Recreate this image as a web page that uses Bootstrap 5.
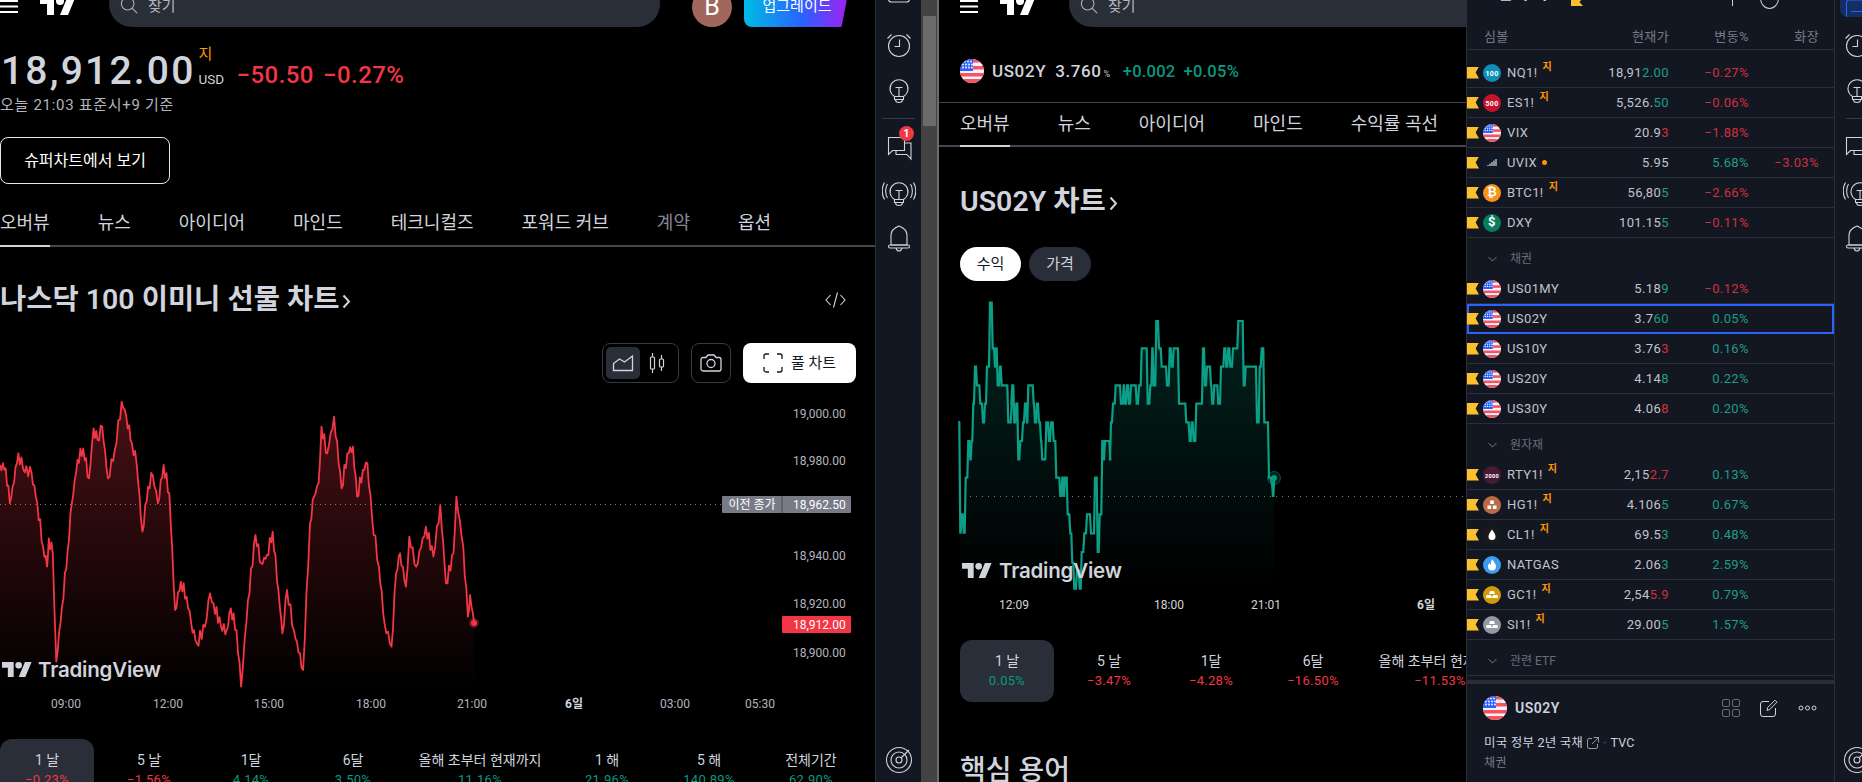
<!DOCTYPE html>
<html lang="ko">
<head>
  <meta charset="UTF-8">
  <title>나스닥 100 이미니 선물 차트</title>
  <link href="https://cdn.jsdelivr.net/npm/bootstrap@5.3.0/dist/css/bootstrap.min.css" rel="stylesheet">
  <style>
    html, body { height: 782px; overflow: hidden; background: #000; }
    body { font-family: Roboto, "Noto Sans CJK KR", sans-serif; color: #d1d4dc; }
    .stage { width: 1862px; height: 782px; overflow: hidden; }
    .pane-a { width: 875px; flex: none; overflow: hidden; }
    .pane-b { width: 527px; flex: none; overflow: hidden; }
    .pad-b { padding-left: 21px; }

    .topbar { height: 27px; overflow: hidden; align-items: flex-end; }
    .burger { width: 18px; height: 13px; margin-bottom: 14px; flex: none; }
    .tv-mark { width: 36px; height: 18px; margin: 0 0 12px 22px; flex: none; }
    .search-box { height: 46px; background: #2a2e39; border-radius: 23px; padding: 0 0 0 11px; flex: none; margin-left: 33px; color: #b2b5be; font-size: 15px; line-height: 51px; }
    .search-box svg { margin: 0 10px 0 0; vertical-align: -3px; }
    .search-a { width: 551px; }
    .search-b { width: 440px; }
    .avatar { width: 40px; height: 40px; border-radius: 50%; background: #a0685c; color: #fff; font-size: 25px; line-height: 40px; text-align: center; margin-left: 32px; flex: none; }
    .upgrade { width: 106px; height: 44px; margin-left: 12px; flex: none; color: #fff; font-size: 15px; text-align: center; line-height: 46px; border-radius: 0 0 0 8px; background: linear-gradient(90deg, #00bce5 0%, #2962ff 55%, #a91cf0 100%); clip-path: polygon(0 0, 100% 0, 92% 100%, 0 100%); }

    .quote-line { height: 58px; padding-top: 23px; }
    .last-price { font-size: 39px; font-weight: 500; letter-spacing: 2.2px; line-height: 42px; margin-left: 1px; }
    .price-tags { width: 38px; margin-left: 3px; }
    .sess-tag { color: #ff9800; font-size: 15px; line-height: 14px; margin-top: -3px; }
    .cur-tag { font-size: 13.5px; line-height: 14px; margin-top: 11px; color: #d1d4dc; }
    .day-change { color: #f23645; font-size: 24px; font-weight: 500; letter-spacing: .45px; line-height: 42px; margin-top: 4px; white-space: nowrap; }
    .day-change span + span { margin-left: 9px; }
    .as-of { font-size: 15px; letter-spacing: .7px; color: #b2b5be; line-height: 18px; margin-top: 11px; }
    .super-btn { display: block; width: 170px; height: 47px; margin: 23px 0 0 0; background: #000; border: 1px solid #e6e7eb; border-radius: 8px; color: #fff; font-size: 16px; line-height: 45px; padding: 0; text-align: center; }

    .page-tabs { height: 63px; border-bottom: 2px solid #434651; gap: 48px; flex-wrap: nowrap; }
    .page-tabs li { height: 61px; line-height: 16px; font-size: 18px; white-space: nowrap; color: #d1d4dc; position: relative; padding-top: 31px; }
    .page-tabs li.on::after { content: ""; position: absolute; left: 0; right: 0; bottom: -2px; height: 2px; background: #d1d4dc; }
    .page-tabs li.dim { color: #868993; }
    .head-a { height: 88px; align-items: center; justify-content: space-between; padding-right: 29px; padding-top: 18px; }
    .chart-title { font-size: 28.5px; font-weight: 600; line-height: 32px; margin: 0; color: #d1d4dc; white-space: nowrap; }
    .chart-title svg { margin-left: 3px; }

    .chart-a { height: 404px; position: relative; }
    .chart-a svg.plot { display: block; }
    .chart-tools { position: absolute; top: 8px; right: 19px; gap: 12px; }
    .tool-group { width: 77px; height: 40px; border: 1px solid #363a45; border-radius: 8px; padding: 3px; }
    .tool-on { width: 34px; height: 32px; background: #2a2e39; border-radius: 5px; }
    .tool-off { width: 34px; height: 32px; }
    .tool-cam { width: 40px; height: 40px; border: 1px solid #363a45; border-radius: 8px; }
    .tool-full { width: 113px; height: 40px; background: #fff; color: #131722; border-radius: 8px; font-size: 15px; gap: 8px; }
    svg text { font-family: Roboto, "Noto Sans CJK KR", sans-serif; }
    .tv-word { font-family: Inter, Lato, sans-serif; font-weight: 600; fill: #d1d4dc; letter-spacing: -.2px; }

    .range-row { gap: 8px; flex-wrap: nowrap; }
    .range-item { width: 94px; height: 62px; flex: none; border-radius: 12px; text-align: center; padding-top: 12px; font-size: 14px; line-height: 19px; white-space: nowrap; }
    .range-item.wide { width: 144px; }
    .range-item.on { background: #2a2e39; }
    .range-item b { display: block; font-weight: 400; font-size: 13px; line-height: 19px; letter-spacing: .3px; }
    .up { color: #089981; }
    .down { color: #f23645; }

    .rail { width: 46px; flex: none; background: #131722; border-left: 1px solid #2a2e39; height: 782px; overflow: hidden; }
    .rail-narrow { width: 27px; border-left: 0; }
    .rail-top { height: 10px; margin-bottom: 12px; overflow: hidden; align-items: flex-end; justify-content: center; }
    .rail svg { display: block; flex: none; color: #d1d4dc; }
    .rail-slot { height: 45px; position: relative; align-items: center; justify-content: center; }
    .rail-line { height: 1px; width: 33px; background: #363a45; margin: 6px auto; }
    .rail-end { margin-top: auto; height: 44px; }
    .rail-narrow .rail-slot { justify-content: flex-start; padding-left: 8px; }
    .rail-narrow .rail-line { margin: 6px 0 6px 11px; width: 16px; }
    .rail-active { height: 17px; margin: 0 0 5px 5px; width: 22px; background: #142e61; border-radius: 0 0 0 8px; overflow: hidden; align-items: flex-end; padding-left: 3px; }
    .rail-active svg { color: #2962ff; margin-bottom: -10px; }
    .count-dot { position: absolute; top: 1px; left: 23px; width: 15px; height: 15px; border-radius: 50%; background: #f23645; color: #fff; font-size: 11px; font-weight: 700; line-height: 15px; text-align: center; }
    .scroll-track { width: 18px; flex: none; background: #434343; border-right: 2px solid #6b6b6b; height: 782px; padding: 16px 1px 0 2px; }
    .scroll-thumb { height: 110px; background: #6b6b6b; }

    .quote-b { height: 76px; padding-top: 32px; gap: 8px; border-bottom: 1px solid #434651; align-items: flex-start; }
    .quote-b svg { flex: none; }
    .quote-b-txt { font-size: 17px; font-weight: 500; line-height: 24px; letter-spacing: .6px; white-space: nowrap; }
    .quote-b-txt small { font-size: 9px; margin-left: 2px; color: #b2b5be; }
    .quote-b-txt .val { margin-left: 9px; }
    .quote-b-txt .up { font-size: 16.5px; letter-spacing: .25px; margin-left: 12px; }
    .quote-b-txt .up + .up { margin-left: 8px; }
    .tabs-b { height: 44px; }
    .tabs-b li { height: 42px; padding-top: 13px; }
    .head-b { height: 100px; align-items: center; padding-top: 10px; }
    .pill-row { gap: 8px; height: 34px; }
    .pill-on, .pill-off { height: 34px; border-radius: 17px; font-size: 15px; line-height: 34px; text-align: center; }
    .pill-on { width: 61px; background: #fff; color: #131722; }
    .pill-off { width: 62px; background: #2a2e39; color: #d1d4dc; }
    .chart-b { height: 344px; margin: 15px 0 0 -21px; }
    .key-terms { font-size: 28px; font-weight: 500; line-height: 36px; margin: 51px 0 0 0; white-space: nowrap; }

    .watch { width: 369px; flex: none; background: #131722; border-left: 1px solid #2a2e39; border-right: 1px solid #2a2e39; height: 782px; overflow: hidden; font-size: 13px; letter-spacing: .4px; }
    .watch-title { height: 10px; overflow: hidden; position: relative; padding-left: 16px; }
    .watch-title b { display: block; margin-top: -17px; font-size: 16px; line-height: 22px; font-weight: 600; }
    .watch-title i { position: absolute; left: 104px; top: -2px; width: 12px; height: 8px; background: #fbc02d; clip-path: polygon(0 0, 100% 0, 70% 50%, 100% 100%, 0 100%); }
    .title-ring { position: absolute; left: 293px; top: -13px; width: 19px; height: 22px; border-radius: 50%; border: 1px solid #d1d4dc; }
    .title-stem { position: absolute; left: 265px; top: 0; width: 1px; height: 6px; background: #d1d4dc; }
    .watch-cols { height: 40px; border-bottom: 1px solid #2a2e39; color: #787b86; align-items: center; padding: 14px 0 0 17px; margin-bottom: 8px; }
    .cols-sym { width: 102px; }
    .cols-last { width: 83px; text-align: right; }
    .wl-row { height: 30px; align-items: center; border-bottom: 1px solid #2a2e39; white-space: nowrap; }
    .wl-sel { outline: 2px solid #2962ff; outline-offset: -2px; }
    .col-sym { width: 90px; flex: none; }
    .col-num { width: 80px; flex: none; text-align: right; }
    .col-ext { width: 70px; flex: none; text-align: right; }
    .wl-flag { width: 12px; height: 12px; background: #fbc02d; clip-path: polygon(0 0, 100% 0, 72% 50%, 100% 100%, 0 100%); margin-right: 4px; flex: none; }
    .wl-ico { width: 18px; height: 18px; margin-right: 6px; flex: none; display: block; }
    .wl-sym { color: #c1c4cc; }
    .wl-tag { color: #ff9800; font-size: 10px; font-weight: 700; position: relative; top: -6px; margin-left: 5px; }
    .wl-dot { width: 5px; height: 5px; border-radius: 50%; background: #ff9800; margin-left: 5px; }
    .wl-price { width: 72px; flex: none; text-align: right; color: #c1c4cc; }
    .tone-up { color: #1f9c86; }
    .tone-down { color: #cf2f3e; }
    .wl-group { height: 36px; align-items: center; color: #6a6d78; font-size: 12px; padding: 6px 0 0 21px; letter-spacing: 0; }
    .wl-group svg { margin-right: 13px; }
    .wl-group.ruled { border-bottom: 1px solid #2a2e39; }
    .wl-break { height: 4px; background: #2a2e39; margin-top: 4px; }
    .det-head { height: 48px; padding: 0 17px 0 16px; align-items: center; }
    .det-head b { font-size: 14px; font-weight: 600; margin-left: 8px; letter-spacing: .5px; }
    .det-gap { margin-left: 20px; }
    .det-line { padding-left: 17px; font-size: 12.5px; line-height: 18px; margin-top: 2px; letter-spacing: .2px; gap: 4px; align-items: center; }
    .det-kind { padding-left: 17px; font-size: 12px; line-height: 18px; color: #787b86; margin-top: 2px; }
  </style>
</head>
<body>
  <!-- shared icons -->
  <svg width="0" height="0" class="d-block position-absolute">
    <symbol id="ico-alarm" viewBox="0 0 28 28"><g fill="none" stroke="currentColor" stroke-width="1.1"><circle cx="14" cy="15" r="10.5"/><path d="M14.5 8.5v7H9.5M2.5 7.5l4-4M25.5 7.5l-4-4"/></g></symbol>
    <symbol id="ico-bulb" viewBox="0 0 28 28"><g fill="none" stroke="currentColor" stroke-width="1.1"><path d="M9.5 20.5a9 9 0 1 1 9 0"/><path d="M10.5 11.5h7M14 11.5v9M9.5 20.5h9v3h-9zM10.5 23.5c0 2 1 3 3.500 3s3.500-1 3.500-3"/></g></symbol>
    <symbol id="ico-chat" viewBox="0 0 28 28"><g fill="none" stroke="currentColor" stroke-width="1.1"><path d="M3.500 3.500h16v13h-12l-4 4z"/><path d="M11 16.500v4h11l4 4.500V9h-6.500"/></g></symbol>
    <symbol id="ico-cast" viewBox="0 0 34 28"><g fill="none" stroke="currentColor" stroke-width="1.1"><path d="M12.500 20.500a9 9 0 1 1 9 0"/><path d="M13.500 11.500h7M17 11.500v9M12.500 20.500h9v3h-9zM13.500 23.500c0 2 1 3 3.500 3s3.500-1 3.500-3M5.500 5c-2.500 4-2.500 10 0 14M2.500 3.500c-3 5-3 12 0 17M28.500 5c2.500 4 2.500 10 0 14M31.500 3.500c3 5 3 12 0 17"/></g></symbol>
    <symbol id="ico-bell" viewBox="0 0 28 28"><g fill="none" stroke="currentColor" stroke-width="1.1"><path d="M14 2c-5 2-8 5-8 9v10h16V11c0-4-3-7-8-9z"/><rect x="3.500" y="21" width="21" height="3" rx="1.500"/><path d="M11 24c.5 2 1.500 3 3 3s2.500-1 3-3"/></g></symbol>
    <symbol id="ico-list" viewBox="0 0 28 28"><g fill="none" stroke="currentColor" stroke-width="1.1"><rect x="3.500" y="1" width="21" height="19" rx="3"/><path d="M8 12.500h12"/></g></symbol>
    <symbol id="ico-target" viewBox="0 0 28 28"><g fill="none" stroke="currentColor" stroke-width="1.1"><circle cx="14" cy="14" r="12.500"/><circle cx="14" cy="14" r="8"/><circle cx="14" cy="14" r="3"/><path d="M16 12l8-8"/></g></symbol>
    <symbol id="flag-us" viewBox="0 0 24 24">
      <clipPath id="flag-clip"><circle cx="12" cy="12" r="12"/></clipPath>
      <g clip-path="url(#flag-clip)"><rect width="24" height="24" fill="#f0f3fa"/><rect width="24" height="3.500" fill="#f7525f"/><rect y="7" width="24" height="3.500" fill="#f7525f"/><rect y="14" width="24" height="3.500" fill="#f7525f"/><rect y="20" width="24" height="4" fill="#f7525f"/><rect width="13" height="12" fill="#2962ff"/>
      <g fill="#fff"><circle cx="5" cy="2.500" r=".9"/><circle cx="8" cy="2.500" r=".9"/><circle cx="11" cy="2.500" r=".9"/><circle cx="3" cy="5.500" r=".9"/><circle cx="6" cy="5.500" r=".9"/><circle cx="9" cy="5.500" r=".9"/><circle cx="12" cy="5.500" r=".9"/><circle cx="3" cy="8.500" r=".9"/><circle cx="6" cy="8.500" r=".9"/><circle cx="9" cy="8.500" r=".9"/><circle cx="12" cy="8.500" r=".9"/></g></g>
    </symbol>
    <symbol id="tv-logo" viewBox="0 4 36 18"><path fill="currentColor" d="M14 22H7V11H0V4h14v18zM28 22h-8l7.500-18h8L28 22z"/><circle fill="currentColor" cx="20" cy="8" r="4"/></symbol>
    <symbol id="ico-burger" viewBox="0 0 18 13"><path fill="currentColor" d="M0 0h18v2H0zM0 5.500h18v2H0zM0 11h18v2H0z"/></symbol>
    <symbol id="ico-search" viewBox="0 0 20 20"><g fill="none" stroke="#b2b5be" stroke-width="1.200"><circle cx="8.500" cy="8.500" r="7"/><path d="M13.500 13.500l5.500 5.500"/></g></symbol>
  </svg>

  <div class="stage d-flex">
    <!-- left window -->
    <div class="pane-a">
      <div class="topbar d-flex text-white">
        <svg class="burger"><use href="#ico-burger"/></svg>
        <svg class="tv-mark"><use href="#tv-logo"/></svg>
        <div class="search-box search-a"><svg width="18" height="18"><use href="#ico-search"/></svg>찾기</div>
        <div class="avatar">B</div>
        <div class="upgrade">업그레이드</div>
      </div>
      <div class="quote-line d-flex">
        <div class="last-price">18,912.00</div>
        <div class="price-tags"><div class="sess-tag">지</div><div class="cur-tag">USD</div></div>
        <div class="day-change"><span>−50.50</span><span>−0.27%</span></div>
      </div>
      <div class="as-of">오늘 21:03 표준시+9 기준</div>
      <button class="super-btn" type="button">슈퍼차트에서 보기</button>
      <ul class="nav page-tabs">
        <li class="on">오버뷰</li><li>뉴스</li><li>아이디어</li><li>마인드</li><li>테크니컬즈</li><li>포워드 커브</li><li class="dim">계약</li><li>옵션</li>
      </ul>
      <div class="head-a d-flex">
        <h2 class="chart-title">나스닥 100 이미니 선물 차트<svg width="9" height="16" viewBox="0 0 9 16"><path d="M1.500 2.500L7 8.500l-5.500 6" fill="none" stroke="#d1d4dc" stroke-width="2"/></svg></h2>
        <svg width="21" height="18" viewBox="0 0 21 18"><path d="M5.500 4L1 9l4.500 5M15.500 4L20 9l-4.500 5M12.500 1.500l-4 15" fill="none" stroke="#d1d4dc" stroke-width="1.100"/></svg>
      </div>
      <div class="chart-a">
        <svg class="plot" id="plot-a" width="875" height="404" viewBox="0 335 875 404"></svg>
        <div class="chart-tools d-flex">
          <div class="tool-group d-flex">
            <div class="tool-on d-flex align-items-center justify-content-center"><svg width="22" height="18" viewBox="0 0 22 18"><path d="M1.500 16.500v-7l6-4.500 5 3 8-6v14.500z" fill="none" stroke="#d1d4dc" stroke-width="1.300"/></svg></div>
            <div class="tool-off d-flex align-items-center justify-content-center"><svg width="18" height="22" viewBox="0 0 18 22"><g fill="none" stroke="#d1d4dc" stroke-width="1.200"><rect x="2.500" y="5" width="4" height="12" rx="1"/><rect x="11.500" y="7" width="4" height="8" rx="1"/><path d="M4.500 1v4M4.500 17v4M13.500 3v4M13.500 15v4"/></g></svg></div>
          </div>
          <div class="tool-cam d-flex align-items-center justify-content-center"><svg width="22" height="20" viewBox="0 0 22 20"><g fill="none" stroke="#d1d4dc" stroke-width="1.300"><path d="M1 6.500a2 2 0 0 1 2-2h3l2-2.500h6l2 2.500h3a2 2 0 0 1 2 2V16a2 2 0 0 1-2 2H3a2 2 0 0 1-2-2z"/><circle cx="11" cy="10.500" r="4"/></g></svg></div>
          <div class="tool-full d-flex align-items-center justify-content-center"><svg width="20" height="20" viewBox="0 0 20 20"><path d="M1 6V3a2 2 0 0 1 2-2h3M14 1h3a2 2 0 0 1 2 2v3M19 14v3a2 2 0 0 1-2 2h-3M6 19H3a2 2 0 0 1-2-2v-3" fill="none" stroke="#131722" stroke-width="1.300"/></svg>풀 차트</div>
        </div>
      </div>
      <div class="range-row d-flex" id="range-a"></div>
    </div>

    <div class="rail d-flex flex-column" id="rail-main"></div>
    <div class="scroll-track"><div class="scroll-thumb"></div></div>

    <!-- middle window -->
    <div class="pane-b">
      <div class="topbar d-flex text-white pad-b">
        <svg class="burger"><use href="#ico-burger"/></svg>
        <svg class="tv-mark"><use href="#tv-logo"/></svg>
        <div class="search-box search-b"><svg width="18" height="18"><use href="#ico-search"/></svg>찾기</div>
      </div>
      <div class="quote-b d-flex pad-b">
        <svg width="24" height="24"><use href="#flag-us"/></svg>
        <div class="quote-b-txt">US02Y<span class="val">3.760</span><small>%</small><span class="up">+0.002</span><span class="up">+0.05%</span></div>
      </div>
      <ul class="nav page-tabs tabs-b pad-b">
        <li class="on">오버뷰</li><li>뉴스</li><li>아이디어</li><li>마인드</li><li>수익률 곡선</li>
      </ul>
      <div class="pad-b">
        <div class="head-b d-flex">
          <h2 class="chart-title">US02Y 차트<svg width="9" height="16" viewBox="0 0 9 16"><path d="M1.500 2.500L7 8.500l-5.500 6" fill="none" stroke="#d1d4dc" stroke-width="2"/></svg></h2>
        </div>
        <div class="pill-row d-flex"><div class="pill-on">수익</div><div class="pill-off">가격</div></div>
        <div class="chart-b"><svg id="plot-b" class="d-block" width="527" height="344" viewBox="939 295 527 344"></svg></div>
        <div class="range-row d-flex" id="range-b"></div>
        <h3 class="key-terms">핵심 용어</h3>
      </div>
    </div>

    <!-- watchlist -->
    <div class="watch">
      <div class="watch-title"><b>노란색 리스트</b><i></i><span class="title-stem"></span><span class="title-ring"></span></div>
      <div class="watch-cols d-flex">
        <div class="cols-sym">심볼</div>
        <div class="cols-last">현재가</div>
        <div class="col-num">변동%</div>
        <div class="col-ext">화장</div>
      </div>
      <div id="wl-body"></div>
    </div>

    <div class="rail rail-narrow d-flex flex-column" id="rail-side"></div>
  </div>

  <script>
    // rails
    function railHtml(narrow) {
      let top = narrow
        ? '<div class="rail-active d-flex"><svg width="28" height="28"><use href="#ico-list"/></svg></div>'
        : '<div class="rail-top d-flex"><svg width="28" height="28"><use href="#ico-list"/></svg></div>';
      return top +
        '<div class="rail-slot d-flex"><svg width="28" height="28"><use href="#ico-alarm"/></svg></div>' +
        '<div class="rail-slot d-flex"><svg width="28" height="28"><use href="#ico-bulb"/></svg></div>' +
        '<div class="rail-line"></div>' +
        '<div class="rail-slot d-flex"><svg width="28" height="28"><use href="#ico-chat"/></svg>' + (narrow ? '' : '<span class="count-dot">1</span>') + '</div>' +
        '<div class="rail-slot d-flex"><svg width="34" height="28"><use href="#ico-cast"/></svg></div>' +
        '<div class="rail-slot d-flex"><svg width="28" height="28"><use href="#ico-bell"/></svg></div>' +
        '<div class="rail-end d-flex rail-slot"><svg width="28" height="28"><use href="#ico-target"/></svg></div>';
    }
    document.getElementById("rail-main").innerHTML = railHtml(false);
    document.getElementById("rail-side").innerHTML = railHtml(true);

    // period tabs
    function rangeHtml(rows) {
      return rows.map(function(r, i) {
        let cls = "range-item" + (i === 0 ? " on" : "") + (r[0].length > 6 ? " wide" : "");
        return '<div class="' + cls + '">' + r[0] + '<b class="' + (r[1][0] === "−" ? "down" : "up") + '">' + r[1] + '</b></div>';
      }).join("");
    }
    document.getElementById("range-a").innerHTML = rangeHtml([["1 날","−0.23%"],["5 날","−1.56%"],["1달","4.14%"],["6달","3.50%"],["올해 초부터 현재까지","11.16%"],["1 해","21.96%"],["5 해","140.89%"],["전체기간","62.90%"]]);
    document.getElementById("range-b").innerHTML = rangeHtml([["1 날","0.05%"],["5 날","−3.47%"],["1달","−4.28%"],["6달","−16.50%"],["올해 초부터 현재까지","−11.53%"]]);

    // red chart, traced from the picture (x/1.742, y/3 + 390)
    const redTrace = [[0,225],[10,235],[17,340],[22,290],[32,190],[40,235],[55,250],[65,340],[75,470],[82,530],[85,445],[92,490],[98,815],[108,650],[118,480],[125,340],[135,210],[145,175],[155,265],[163,115],[170,150],[178,110],[188,265],[200,180],[212,35],[220,80],[230,160],[238,220],[248,425],[258,290],[266,255],[275,340],[285,225],[295,310],[305,660],[315,575],[325,620],[333,700],[343,760],[357,710],[366,610],[372,640],[385,710],[395,720],[402,655],[412,720],[420,890],[432,630],[445,435],[455,520],[465,495],[475,425],[485,600],[492,730],[500,600],[512,720],[528,840],[540,400],[547,320],[555,280],[560,110],[570,190],[582,80],[595,295],[605,190],[615,170],[622,320],[632,240],[640,220],[648,380],[660,530],[670,700],[682,770],[690,550],[697,490],[707,590],[713,440],[725,530],[742,410],[755,500],[767,345],[777,580],[790,490],[795,320],[807,470],[815,680],[819,615],[826,700]];
    let redPts = [];
    redTrace.forEach(function(p, i) {
      let x = p[0] / 1.742, y = p[1] / 3 + 390;
      if (i > 0) {
        let ax = redTrace[i-1][0] / 1.742, ay = redTrace[i-1][1] / 3 + 390;
        let n = Math.max(2, Math.round((x - ax) / 1.6));
        for (let k = 1; k < n; k++) {
          let t = k / n;
          let wob = (k % 2 ? 1 : -1) * (1 + 5 * Math.abs(Math.sin(i * 7.3 + k * 2.9)));
          redPts.push([ax + (x - ax) * t, ay + (y - ay) * t + wob]);
        }
      }
      redPts.push([x, y]);
    });
    function toLine(pts) { return pts.map(function(p) { return p[0].toFixed(1) + "," + p[1].toFixed(1); }).join(" "); }
    function axis(x, y, t, fill, anchor) { return '<text x="' + x + '" y="' + y + '" fill="' + (fill || "#b2b5be") + '" font-size="12" text-anchor="' + (anchor || "middle") + '">' + t + '</text>'; }

    let a = '<defs><linearGradient id="fill-red" gradientUnits="userSpaceOnUse" x1="0" y1="400" x2="0" y2="690"><stop offset="0" stop-color="#f23645" stop-opacity=".3"/><stop offset="1" stop-color="#f23645" stop-opacity="0"/></linearGradient></defs>';
    a += '<polygon fill="url(#fill-red)" points="0,690 ' + toLine(redPts) + ' 474,690"/>';
    a += '<line x1="0" x2="722" y1="504.500" y2="504.500" stroke="#787b86" stroke-dasharray="1 4"/>';
    a += '<polyline fill="none" stroke="#f23645" stroke-width="1.800" stroke-linejoin="round" points="' + toLine(redPts) + '"/>';
    a += '<circle cx="474" cy="623" r="5" fill="#f23645" fill-opacity=".35"/><circle cx="474" cy="623" r="3" fill="#f23645"/>';
    [[413,"19,000.00"],[460,"18,980.00"],[555,"18,940.00"],[603,"18,920.00"],[652,"18,900.00"]].forEach(function(l) { a += axis(793, l[0] + 5, l[1], "#b2b5be", "start"); });
    a += '<rect x="722" y="496" width="129" height="17" rx="1" fill="#787b86"/><line x1="782" x2="782" y1="496" y2="513" stroke="#131722" stroke-opacity=".5"/>';
    a += axis(752, 508.500, "이전 종가", "#fff") + axis(793, 508.500, "18,962.50", "#fff", "start");
    a += '<rect x="782" y="616" width="69" height="17" rx="1" fill="#f23645"/>' + axis(793, 629, "18,912.00", "#fff", "start");
    [[66,"09:00"],[168,"12:00"],[269,"15:00"],[371,"18:00"],[472,"21:00"],[675,"03:00"],[760,"05:30"]].forEach(function(l) { a += axis(l[0], 708, l[1]); });
    a += '<text x="574" y="708" fill="#d1d4dc" font-size="12" font-weight="700" text-anchor="middle">6일</text>';
    a += '<svg x="2" y="662" width="30" height="15" color="#d1d4dc"><use href="#tv-logo"/></svg><text class="tv-word" x="38" y="677" font-size="20.5">TradingView</text>';
    document.getElementById("plot-a").innerHTML = a;

    // green chart, traced the same way (x/3 + 955, y/3 + 295), drawn as steps
    const greenTrace = [16,378,16,710,20,655,26,710,32,545,40,435,46,490,50,435,55,323,60,212,66,268,70,268,76,323,84,379,90,323,96,212,105,20,113,157,120,212,124,157,128,268,135,212,140,268,152,268,160,379,170,323,172,268,178,379,184,323,190,490,196,435,204,379,210,323,216,379,220,268,232,268,236,323,240,379,246,323,252,379,258,435,262,490,270,490,274,379,282,435,288,379,296,435,304,545,312,545,316,600,322,545,326,600,330,545,338,655,346,712,352,800,358,878,366,823,374,878,380,768,388,712,396,655,402,655,408,712,414,712,420,545,428,768,434,655,442,435,446,490,450,435,462,435,466,490,468,379,474,323,482,268,494,268,498,323,506,268,510,323,516,268,522,323,528,268,540,268,545,323,552,268,560,157,572,157,578,323,586,268,592,157,596,268,604,75,612,157,620,212,628,212,636,268,644,157,650,212,656,157,664,157,672,323,688,323,694,379,704,435,710,379,716,435,724,323,736,323,744,157,750,268,756,212,768,268,772,323,778,268,790,323,798,212,808,157,814,212,820,157,826,212,834,157,842,157,850,75,860,75,866,268,872,212,896,212,906,379,914,212,920,157,928,379,934,379,942,545,950,560,954,600,958,545];
    let greenPts = [];
    for (let i = 0; i < greenTrace.length; i += 2) {
      let x = greenTrace[i] / 3 + 955, y = greenTrace[i+1] / 3 + 295;
      if (i > 0) greenPts.push([x - 1, greenTrace[i-1] / 3 + 295]);
      greenPts.push([x, y]);
    }
    let b = '<defs><linearGradient id="fill-green" gradientUnits="userSpaceOnUse" x1="0" y1="300" x2="0" y2="590"><stop offset="0" stop-color="#089981" stop-opacity=".24"/><stop offset="1" stop-color="#089981" stop-opacity="0"/></linearGradient></defs>';
    b += '<polygon fill="url(#fill-green)" points="960,590 ' + toLine(greenPts) + ' 1274,590"/>';
    b += '<line x1="970" x2="1466" y1="495.500" y2="495.500" stroke="#787b86" stroke-dasharray="1 5"/>';
    b += '<polyline fill="none" stroke="#0a9f86" stroke-width="2.200" stroke-linejoin="miter" points="' + toLine(greenPts) + '"/>';
    b += '<circle cx="1274" cy="477" r="6.500" fill="#089981" fill-opacity=".2" stroke="#089981" stroke-opacity=".5"/><circle cx="1274" cy="477" r="3" fill="#089981"/>';
    b += '<svg x="962" y="562" width="30" height="15" color="#d1d4dc"><use href="#tv-logo"/></svg><text class="tv-word" x="999" y="577" font-size="20.5">TradingView</text>';
    [[1014,"12:09"],[1169,"18:00"],[1266,"21:01"]].forEach(function(l) { b += axis(l[0], 608, l[1], "#d1d4dc"); });
    b += '<text x="1426" y="608" fill="#d1d4dc" font-size="12" font-weight="700" text-anchor="middle">6일</text>';
    document.getElementById("plot-b").innerHTML = b;

    // watchlist
    const ic = {
      us: '<svg class="wl-ico"><use href="#flag-us"/></svg>',
      disc: function(bg, inner) { return '<svg class="wl-ico" viewBox="0 0 18 18"><circle cx="9" cy="9" r="9" fill="' + bg + '"/>' + inner + '</svg>'; },
      label: function(t, s) { return '<text x="9" y="11.500" fill="#fff" font-size="' + s + '" font-weight="700" text-anchor="middle">' + t + '</text>'; }
    };
    const ingot = '<path fill="#fff" d="M7 5h4l1 3H6zM3.500 9h4.500l1 3H3zM10 9h4.500l.5 3H9z"/>';
    const watchRows = [
      { s: "NQ1!", tag: 1, i: ic.disc("#0d8fb8", ic.label("100", 7)), p: "18,91", q: "2.00", t: "up", c: "−0.27%" },
      { s: "ES1!", tag: 1, i: ic.disc("#c4122f", ic.label("500", 7)), p: "5,526.", q: "50", t: "up", c: "−0.06%" },
      { s: "VIX", i: ic.us, p: "20.9", q: "3", t: "down", c: "−1.88%" },
      { s: "UVIX", dot: 1, i: ic.disc("#0e1a2b", '<path fill="none" stroke="#fff" d="M5 12v-1M7 12V9.500M9 12V8M11 12V6.500M13 12V5"/>'), p: "5.95", q: "", t: "up", c: "5.68%", e: "−3.03%" },
      { s: "BTC1!", tag: 1, i: ic.disc("#f7931a", ic.label("₿", 12)), p: "56,80", q: "5", t: "up", c: "−2.66%" },
      { s: "DXY", i: ic.disc("#0a7d5f", ic.label("$", 13)), p: "101.15", q: "5", t: "up", c: "−0.11%" },
      { group: "채권" },
      { s: "US01MY", i: ic.us, p: "5.18", q: "9", t: "up", c: "−0.12%" },
      { s: "US02Y", sel: 1, i: ic.us, p: "3.7", q: "60", t: "up", c: "0.05%" },
      { s: "US10Y", i: ic.us, p: "3.76", q: "3", t: "down", c: "0.16%" },
      { s: "US20Y", i: ic.us, p: "4.14", q: "8", t: "up", c: "0.22%" },
      { s: "US30Y", i: ic.us, p: "4.06", q: "8", t: "down", c: "0.20%" },
      { group: "원자재" },
      { s: "RTY1!", tag: 1, i: ic.disc("#4a1a35", ic.label("2000", 5.500)), p: "2,15", q: "2.7", t: "down", c: "0.13%" },
      { s: "HG1!", tag: 1, i: ic.disc("#b96d47", '<path fill="#fff" d="M7.200 4.500h3.600v3.600H7.200zM4.500 9.500h3.600v3.600H4.500zM9.900 9.500h3.600v3.600H9.900z"/>'), p: "4.106", q: "5", t: "up", c: "0.67%" },
      { s: "CL1!", tag: 1, i: ic.disc("#1a1a1a", '<path fill="#fff" d="M9 3.500c2 3 3.500 4.800 3.500 7a3.500 3.500 0 0 1-7 0c0-2.200 1.500-4 3.500-7z"/>'), p: "69.5", q: "3", t: "up", c: "0.48%" },
      { s: "NATGAS", i: ic.disc("#3d9cf0", '<path fill="#fff" d="M9.500 3c.5 2.500 3.500 4 3.500 7.500a4 4 0 0 1-8 0c0-1.700.8-2.700 1.700-3.600.2 1 .6 1.500 1.200 1.800C7.700 6.500 8.200 4.500 9.500 3z"/>'), p: "2.06", q: "3", t: "up", c: "2.59%" },
      { s: "GC1!", tag: 1, i: ic.disc("#d29a07", ingot), p: "2,54", q: "5.9", t: "down", c: "0.79%" },
      { s: "SI1!", tag: 1, i: ic.disc("#9598a1", ingot), p: "29.00", q: "5", t: "up", c: "1.57%" },
      { group: "관련 ETF", last: 1 }
    ];
    const chev = '<svg width="9" height="6" viewBox="0 0 9 6"><path d="M.5 1l4 4 4-4" fill="none" stroke="#787b86"/></svg>';
    document.getElementById("wl-body").innerHTML = watchRows.map(function(r) {
      if (r.group) return '<div class="wl-group d-flex' + (r.last ? " ruled" : "") + '">' + chev + r.group + '</div>';
      let cTone = r.c[0] === "−" ? "tone-down" : "tone-up";
      return '<div class="wl-row d-flex' + (r.sel ? " wl-sel" : "") + '">' +
        '<span class="wl-flag"></span>' + r.i +
        '<div class="d-flex align-items-center col-sym"><span class="wl-sym">' + r.s + '</span>' +
        (r.tag ? '<span class="wl-tag">지</span>' : '') + (r.dot ? '<span class="wl-dot"></span>' : '') + '</div>' +
        '<div class="wl-price">' + r.p + (r.q ? '<span class="tone-' + r.t + '">' + r.q + '</span>' : '') + '</div>' +
        '<div class="col-num ' + cTone + '">' + r.c + '</div>' +
        '<div class="col-ext tone-down">' + (r.e || "") + '</div></div>';
    }).join("") +
    '<div class="wl-break"></div>' +
    '<div class="det-head d-flex"><svg width="24" height="24"><use href="#flag-us"/></svg><b>US02Y</b>' +
      '<svg class="ms-auto" width="18" height="18" viewBox="0 0 18 18"><g fill="none" stroke="#6a6d78"><rect x=".5" y=".5" width="7" height="7" rx="1.500"/><rect x="10.500" y=".5" width="7" height="7" rx="1.500"/><rect x=".5" y="10.500" width="7" height="7" rx="1.500"/><rect x="10.500" y="10.500" width="7" height="7" rx="1.500"/></g></svg>' +
      '<svg class="det-gap" width="18" height="18" viewBox="0 0 18 18"><g fill="none" stroke="#d1d4dc"><path d="M9 2.500H3A2.500 2.500 0 0 0 .5 5v10A2.500 2.500 0 0 0 3 17.500h10a2.500 2.500 0 0 0 2.500-2.500V9"/><path d="M7 11.500l.7-3L15 1.200l2 2-7.300 7.300z"/></g></svg>' +
      '<svg class="det-gap" width="19" height="6" viewBox="0 0 19 6"><g fill="none" stroke="#d1d4dc"><circle cx="3" cy="3" r="2"/><circle cx="9.500" cy="3" r="2"/><circle cx="16" cy="3" r="2"/></g></svg></div>' +
    '<div class="det-line d-flex">미국 정부 2년 국채<svg width="12" height="12" viewBox="0 0 12 12"><path d="M5 1.500H2a1.500 1.500 0 0 0-1.500 1.500v7A1.500 1.500 0 0 0 2 11.500h7A1.500 1.500 0 0 0 10.500 10V7M6.500.5h5v5M11.500.5L5 7" fill="none" stroke="#9598a1"/></svg><span class="text-secondary">·</span>TVC</div>' +
    '<div class="det-kind">채권</div>';
  </script>
  <script src="https://cdn.jsdelivr.net/npm/bootstrap@5.3.0/dist/js/bootstrap.bundle.min.js"></script>
</body>
</html>
